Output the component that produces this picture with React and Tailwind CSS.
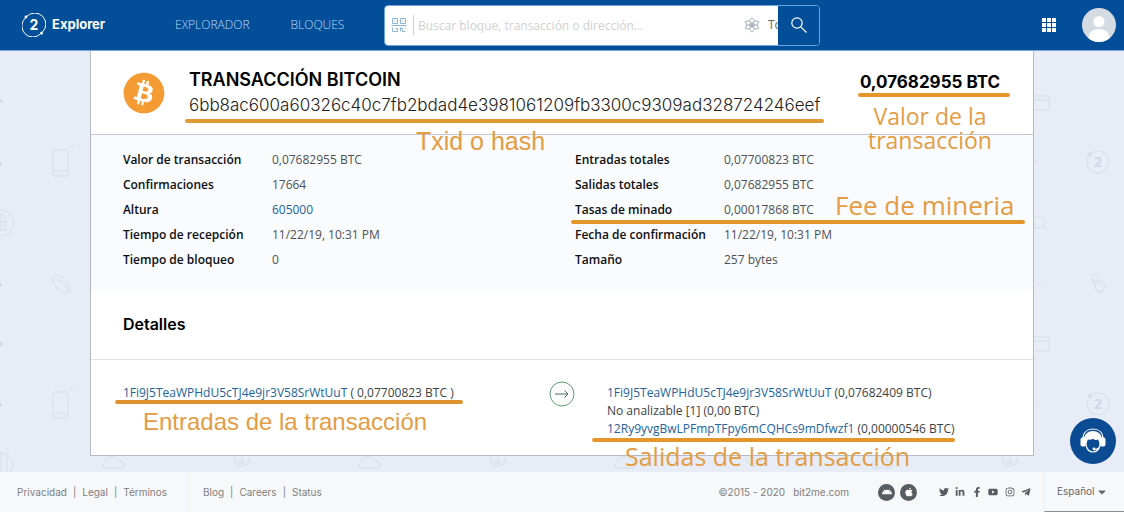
import React, { useState } from 'react';
import {
    FaAndroid,
    FaApple,
    FaBitcoin,
    FaCaretDown,
    FaFacebookF,
    FaInstagram,
    FaLinkedinIn,
    FaTelegramPlane,
    FaTwitter,
    FaYoutube
} from 'react-icons/fa';

const leftStats = [
    { label: 'Valor de transacción', value: '0,07682955 BTC' },
    { label: 'Confirmaciones', value: '17664' },
    { label: 'Altura', value: '605000', link: true },
    { label: 'Tiempo de recepción', value: '11/22/19, 10:31 PM' },
    { label: 'Tiempo de bloqueo', value: '0' }
];

const rightStats = [
    { label: 'Entradas totales', value: '0,07700823 BTC' },
    { label: 'Salidas totales', value: '0,07682955 BTC' },
    { label: 'Tasas de minado', value: '0,00017868 BTC', note: 'Fee de mineria' },
    { label: 'Fecha de confirmación', value: '11/22/19, 10:31 PM' },
    { label: 'Tamaño', value: '257 bytes' }
];

const socialLinks = [
    { name: 'Twitter', Icon: FaTwitter },
    { name: 'LinkedIn', Icon: FaLinkedinIn },
    { name: 'Facebook', Icon: FaFacebookF },
    { name: 'YouTube', Icon: FaYoutube },
    { name: 'Instagram', Icon: FaInstagram },
    { name: 'Telegram', Icon: FaTelegramPlane }
];

const Logo = () => (
    <svg viewBox="0 0 24 24" className="size-6" fill="none" stroke="white">
        <path d="M5 3.2A11 11 0 0 1 20.5 19M18.5 21A11 11 0 0 1 3.3 5" strokeWidth="1" />
        <circle cx="4" cy="4" r="1.4" fill="white" stroke="none" />
        <circle cx="19.6" cy="20.2" r="1.4" fill="white" stroke="none" />
        <text x="12" y="17" textAnchor="middle" fontSize="14" fontWeight="700" fill="white" stroke="none">2</text>
    </svg>
);

const QrIcon = () => (
    <svg viewBox="0 0 16 16" className="size-4 shrink-0" fill="none" stroke="#8db4d6">
        <path d="M1.5 1.5h5v5h-5zM9.5 1.5h5v5h-5zM3.5 4h1M11.5 4h1M0.5 8.5h15M1.5 10.5v4h5v-3h-2M9.5 10.5v4M9.5 11.5h2v3h3M14 11h1" />
    </svg>
);

const AtomIcon = () => (
    <svg viewBox="0 0 18 18" className="size-4 shrink-0" fill="none" stroke="#8d9aa5" strokeWidth="0.9">
        <path d="M9 1l3 3.4 4.4.6-1.5 4 1.5 4-4.4.6L9 17l-3-3.4-4.4-.6 1.5-4-1.5-4L6 4.4z" />
        <circle cx="9" cy="9" r="2.6" />
        <path d="M6 4.4l6 9.2M12 4.4l-6 9.2M3.1 9h11.8" />
    </svg>
);

const SearchIcon = () => (
    <svg viewBox="0 0 16 16" className="size-4" fill="none" stroke="white" strokeWidth="1.2">
        <circle cx="6" cy="6" r="5.2" />
        <path d="M9.8 9.8l5.7 5.7" />
    </svg>
);

const AppsIcon = () => (
    <svg viewBox="0 0 14 14" className="size-3.5" fill="white">
        <path d="M0 0h4v4H0zM5 0h4v4H5zM10 0h4v4h-4zM0 5h4v4H0zM5 5h4v4H5zM10 5h4v4h-4zM0 10h4v4H0zM5 10h4v4H5zM10 10h4v4h-4z" />
    </svg>
);

const Avatar = () => (
    <svg viewBox="0 0 34 34" className="size-[34px] rounded-full">
        <rect width="34" height="34" fill="#d5dbe3" />
        <circle cx="17" cy="13.5" r="5.5" fill="white" />
        <path d="M6 34c0-10 4.5-13 11-13s11 3 11 13z" fill="white" />
    </svg>
);

const SupportIcon = () => (
    <svg viewBox="0 0 26 26" className="size-[26px]" fill="none" stroke="white">
        <path d="M3 11C3 4.5 7 1 13 1s10 3.5 10 10" strokeWidth="1.2" />
        <path d="M4 11C4.5 6 8 3 13 3s8.500 3 9 8l-2.500 7c0-3-.5-5-1.500-6.500-2 .8-3.500.4-5-.8-1.500 1.200-3.500 1.300-5 .8C7 13 6.500 15 6.500 18z" fill="white" stroke="none" />
        <rect x="0.5" y="9.5" width="5.5" height="9" rx="2" fill="white" stroke="none" />
        <rect x="20" y="9.5" width="5.5" height="9" rx="2" fill="white" stroke="none" />
        <path d="M6 17c1 4.5 4 7 7 7s6-2.500 7-7M20 18c-1 3-3 3.500-6 3.200" strokeWidth="1.2" />
        <circle cx="14" cy="21" r="1.4" fill="white" stroke="none" />
    </svg>
);

// Faint drawings in the page margins, one strip for each side
const LeftDoodles = () => (
    <svg className="absolute left-0 top-0 h-[421px] w-[90px]" viewBox="0 0 90 421" fill="none" stroke="#d6dfe9">
        <path d="M0 48l3 2-3 2M0 111l2 2-2 2M0 232l2 2-2 2M0 291l3 2-3 2M0 352l2 2-2 2" fill="#cfd9e4" />
        <rect x="53" y="99" width="15" height="26" rx="2" />
        <path d="M53 120h15M70 97l4-4" />
        <circle cx="1" cy="172" r="13" />
        <path d="M1 162v18M5 164v16M0 171h8M0 179h7" />
        <path d="M53 225c4-2 8-1 12 4s5 8 4 12c-5 2-9 0-12-4s-5-8-4-12zM57 229c4 0 9 5 10 9" />
        <rect x="53" y="341" width="15" height="26" rx="2" />
        <path d="M53 362h15M70 339l4-4" />
        <circle cx="1" cy="414" r="12" />
        <path d="M1 402v19M7 405v16" />
    </svg>
);

const RightDoodles = () => (
    <svg className="absolute right-0 top-0 h-[421px] w-[90px]" viewBox="0 0 90 421" fill="none" stroke="#d6dfe9">
        {[111, 353].map((y) => (
            <g key={y}>
                <circle cx="64" cy={y} r="11" />
                <circle cx="56" cy={y - 8} r="1.5" fill="#cfd9e4" />
                <text x="64" y={y + 5} textAnchor="middle" fontSize="14" fontWeight="700" fill="#cfd9e4" stroke="none">2</text>
            </g>
        ))}
        <path d="M0 45h15v14H0M0 49h15M0 286h15v14H0M0 290h15" />
        <circle cx="5" cy="171" r="6" />
        <path d="M9 175l3 3M3 233h5M2 109v4M3 351v4" />
        <circle cx="66" cy="235" r="5" />
        <path d="M57 225c2-3 6-2 7 1s-3 5-5 3zM58 229l5 10M63 241h7" />
    </svg>
);

const BottomDoodles = () => (
    <div className="absolute inset-x-0 bottom-0 flex h-4 justify-around px-[50px]">
        {[0, 1, 2, 3, 4, 5, 6, 7].map((n) => (
            <svg key={n} viewBox="0 0 26 16" className="h-4 w-[26px]" fill="none" stroke="#d2dce7">
                {n % 2 === 0
                    ? <path d="M4 12a4 4 0 0 1 1-7 8 8 0 0 1 14 0 4 4 0 0 1 3 7z" />
                    : <path d="M5 2a8 8 0 0 0 16 0M13 1v6M10 5l3 3 3-3" />}
            </svg>
        ))}
    </div>
);

const Header = () => {
    const [query, setQuery] = useState('');

    return (
        <header className="flex h-[50px] items-center justify-between bg-[#034e98] pl-[22px] pr-2">
            <div className="flex items-center">
                <a href="#" className="flex w-[153px] items-center gap-1.5 font-['Inter'] text-[13px] font-bold text-white">
                    <Logo />
                    Explorer
                </a>
                <nav className="flex w-[209px] gap-[41px] text-xs font-light text-[#bcd7f5]">
                    <a href="#explorador">EXPLORADOR</a>
                    <a href="#bloques">BLOQUES</a>
                </nav>
                <form className="flex h-[41px] w-[436px] overflow-hidden rounded border border-[#6fa5dc]" onSubmit={(e) => e.preventDefault()}>
                    <div className="flex min-w-0 flex-1 items-center overflow-hidden bg-white pl-1.5">
                        <QrIcon />
                        <input
                            type="text"
                            aria-label="Buscar"
                            value={query}
                            onChange={(e) => setQuery(e.target.value)}
                            placeholder="Buscar bloque, transacción o dirección..."
                            className="ml-1.5 h-5 min-w-0 flex-1 border-l border-[#c3d3e3] pl-1 text-xs outline-none placeholder:text-[#d0d0d0]"
                        />
                        <AtomIcon />
                        <select aria-label="Red" className="ml-2 w-[10px] shrink-0 appearance-none overflow-hidden text-xs text-[#666]">
                            <option>Todo</option>
                        </select>
                    </div>
                    <button type="submit" aria-label="Buscar" className="flex w-[41px] items-center justify-center bg-[#034e98]">
                        <SearchIcon />
                    </button>
                </form>
            </div>
            <div className="flex items-center gap-[26px]">
                <button type="button" aria-label="Aplicaciones"><AppsIcon /></button>
                <button type="button" aria-label="Cuenta"><Avatar /></button>
            </div>
        </header>
    );
};

const StatsTable = ({ rows }) => (
    <table className="w-full table-fixed text-left text-xs">
        <tbody>
            {rows.map((row) => (
                <tr key={row.label} className="h-[25px]">
                    <th scope="row" className="w-[149px] p-0 font-semibold text-[#0c0e11]">{row.label}</th>
                    <td className="relative p-0 text-[#4c5157]">
                        {row.link ? <a href="#altura" className="text-[#22639c]">{row.value}</a> : row.value}
                        {row.note && (
                            <>
                                <span className="absolute left-[111px] top-[-8px] whitespace-nowrap text-[26px] leading-8 text-[#e39c44]">
                                    {row.note}
                                </span>
                                <span className="absolute left-[-153px] right-[-24px] top-[23px] h-1 rounded-full bg-[#e5962a]" />
                            </>
                        )}
                    </td>
                </tr>
            ))}
        </tbody>
    </table>
);

const TransactionCard = () => (
    <main className="relative mx-auto w-[84%] border border-t-0 border-[#b3bbc6] bg-white">
        <section className="flex items-start justify-between border-b border-[#c3c8d0] pb-[14px] pl-8 pr-[33px] pt-[19px]">
            <div className="flex items-start gap-6">
                <FaBitcoin className="mt-0.5 size-[42px] text-[#f49b33]" />
                <div className="relative font-['Inter']">
                    <h1 className="text-lg leading-5 font-semibold text-black">TRANSACCIÓN BITCOIN</h1>
                    <p className="text-[17px] leading-[30px] font-light text-[#222]">
                        6bb8ac600a60326c40c7fb2bdad4e3981061209fb3300c9309ad328724246eef
                    </p>
                    <span className="absolute -left-1 -right-1 top-[49px] h-1 rounded-full bg-[#dd9a35]" />
                    <span className="absolute left-[227px] top-[55px] whitespace-nowrap font-['Liberation_Sans'] text-[25px] leading-8 text-[#e39c44]">
                        Txid o hash
                    </span>
                </div>
            </div>
            <div className="relative">
                <p className="font-['Inter'] text-[17px] leading-6 font-bold text-black">0,07682955 BTC</p>
                <span className="absolute -left-0.5 -right-2.5 top-[23px] h-1 rounded-full bg-[#e5962a]" />
                <span className="absolute inset-x-0 top-[34px] text-center text-[23px] leading-6 text-[#e39c44]">
                    Valor de la transacción
                </span>
            </div>
        </section>

        <section className="grid grid-cols-2 gap-[26px] bg-[#f9fbfc] px-8 pb-[19px] pt-3">
            <StatsTable rows={leftStats} />
            <StatsTable rows={rightStats} />
        </section>

        <section className="border-b border-[#dfe2e6] px-8 pb-[23px] pt-[21px]">
            <h2 className="font-['Inter'] text-base leading-6 font-semibold text-black">Detalles</h2>
        </section>

        <section className="grid grid-cols-[1fr_auto_1fr] gap-8 px-8 pb-[17px] pt-6 text-xs leading-[18px] text-[#3c4147]">
            <div className="relative">
                <p>
                    <a href="#entrada" className="text-[#22639c]">1Fi9J5TeaWPHdU5cTJ4e9jr3V58SrWtUuT</a> ( 0,07700823 BTC )
                </p>
                <span className="absolute -left-2 top-4 h-1 w-[348px] rounded-full bg-[#dd922c]" />
                <span className="absolute left-5 top-[22px] whitespace-nowrap font-['Liberation_Sans'] text-2xl leading-8 text-[#e39c44]">
                    Entradas de la transacción
                </span>
            </div>
            <svg viewBox="0 0 26 26" className="mt-[-3px] size-[26px]" fill="none" stroke="#5d9b72">
                <circle cx="13" cy="13" r="12" />
                <path d="M6 13h13M15.5 9.5L19 13l-3.5 3.5" stroke="#4b6d5b" />
            </svg>
            <div className="relative">
                <p>
                    <a href="#salida-1" className="text-[#22639c]">1Fi9J5TeaWPHdU5cTJ4e9jr3V58SrWtUuT</a> (0,07682409 BTC)
                </p>
                <p>No analizable [1] (0,00 BTC)</p>
                <p>
                    <a href="#salida-2" className="text-[#22639c]">12Ry9yvgBwLPFmpTFpy6mCQHCs9mDfwzf1</a> (0,00000546 BTC)
                </p>
                <span className="absolute left-[-15px] top-[54px] h-1 w-[363px] rounded-full bg-[#e5962a]" />
                <span className="absolute left-[18px] top-14 z-10 whitespace-nowrap text-[25px] leading-8 text-[#e39c44]">
                    Salidas de la transacción
                </span>
            </div>
        </section>
    </main>
);

const Footer = () => (
    <footer className="flex h-10 items-stretch justify-between bg-[#f6f8fa] font-['Inter'] text-[10px] text-[#808080]">
        <div className="flex items-center">
            <nav className="flex w-[187px] items-center gap-1.5 self-stretch border-r border-[#f0f2f5] pl-[17px]">
                <a href="#privacidad">Privacidad</a> |
                <a href="#legal">Legal</a> |
                <a href="#terminos">Términos</a>
            </nav>
            <nav className="flex items-center gap-1.5 pl-4">
                <a href="#blog">Blog</a> |
                <a href="#careers">Careers</a> |
                <a href="#status">Status</a>
            </nav>
        </div>
        <div className="flex items-center">
            <p className="flex gap-2 pr-[29px]">
                <span>©2015 - 2020</span>
                <a href="#bit2me">bit2me.com</a>
            </p>
            <div className="flex gap-[5px] pr-[22px]">
                <a href="#android" aria-label="Android" className="flex size-[17px] items-center justify-center rounded-full bg-[#595c60] text-white">
                    <FaAndroid className="size-2.5" />
                </a>
                <a href="#ios" aria-label="iOS" className="flex size-[17px] items-center justify-center rounded-full bg-[#595c60] text-white">
                    <FaApple className="size-2.5" />
                </a>
            </div>
            <div className="flex w-[105px] justify-between pr-[13px] text-[#595c60]">
                {socialLinks.map(({ name, Icon }) => (
                    <a key={name} href={`#${name}`} aria-label={name}><Icon className="size-2.5" /></a>
                ))}
            </div>
            <button type="button" className="flex w-20 items-center gap-0.5 self-stretch border-b border-l border-b-[#8b8f94] border-l-[#edf0f3] pl-3 text-[#666]">
                Español
                <FaCaretDown className="size-3" />
            </button>
        </div>
    </footer>
);

const App = () => {
    return (
        <div className="font-['Open_Sans',sans-serif]">
            <Header />
            <div className="relative border-t border-[#7ba6da] bg-[#e7ecf6] pb-4">
                <LeftDoodles />
                <RightDoodles />
                <BottomDoodles />
                <TransactionCard />
                <button
                    type="button"
                    aria-label="Soporte"
                    className="absolute bottom-2 right-2 flex size-[46px] items-center justify-center rounded-full bg-[#0b4b94]"
                >
                    <SupportIcon />
                </button>
            </div>
            <Footer />
        </div>
    );
};

export default App;
